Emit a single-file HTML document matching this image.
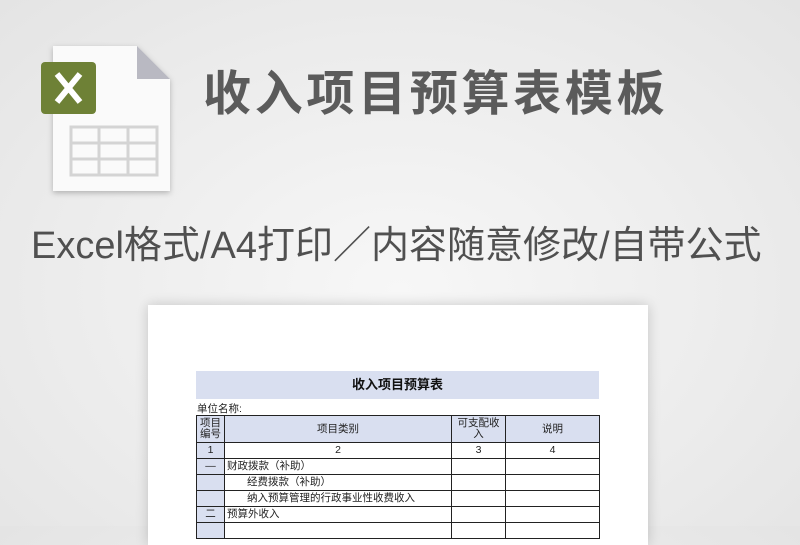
<!DOCTYPE html>
<html><head><meta charset="utf-8"><style>
html,body{margin:0;padding:0}
body{width:800px;height:526px;overflow:hidden;position:relative;background:radial-gradient(ellipse at 50% 55%,#f7f7f7 0%,#ececec 60%,#e4e4e4 100%);font-family:"Liberation Sans","Noto Sans CJK SC",sans-serif}
.t{position:absolute;left:203px;top:54px;font-size:48px;font-weight:bold;color:#5b5b5b;letter-spacing:3.7px;white-space:nowrap}
.s{position:absolute;left:31px;top:214px;font-size:38px;color:#505050;white-space:nowrap}
.paper{position:absolute;left:148px;top:305px;width:500px;height:240px;background:#fff;box-shadow:0 0 12px rgba(0,0,0,.18)}
.ban{position:absolute;left:196px;top:371px;width:403px;height:28px;background:#d9dff0;text-align:center;font-size:13px;font-weight:bold;line-height:28px;color:#111}
.u{position:absolute;left:197px;top:401px;font-size:10.5px;color:#222}
table{position:absolute;left:196px;top:415px;border-collapse:collapse;font-size:10.5px;color:#222}
td{border:1px solid #222;padding:0 2px;height:15px;line-height:11px}
.h td{background:#d9dff0;text-align:center;height:26px}
.g{background:#d9dff0;text-align:center}
</style></head><body>
<svg style="position:absolute;left:30px;top:35px" width="160" height="170" viewBox="0 0 160 170">
<defs><filter id="f" x="-20%" y="-20%" width="140%" height="140%"><feDropShadow dx="0" dy="2" stdDeviation="3" flood-opacity=".25"/></filter></defs>
<path d="M23 11 H107 L140 44 V156 H23 Z" fill="#fafafa" filter="url(#f)"/>
<path d="M107 11 L140 44 H107 Z" fill="#b9b9c2"/>
<rect x="11" y="27" width="55" height="52" rx="4" fill="#6e8136"/>
<path d="M27 39 L50 67 M50 39 L27 67" stroke="#fff" stroke-width="6"/>
<g fill="none" stroke="#d4d4d4" stroke-width="3"><rect x="41" y="92" width="86" height="48"/><path d="M41 108H127M41 124H127M69 92V140M98 92V140"/></g>
</svg>
<div class="t">收入项目预算表模板</div>
<div class="s">Excel格式/A4打印／内容随意修改/自带公式</div>
<div class="paper"></div>
<div class="ban">收入项目预算表</div>
<div class="u">单位名称:</div>
<table>
<tr class="h"><td style="width:23px">项目<br>编号</td><td style="width:222px">项目类别</td><td style="width:49px">可支配收<br>入</td><td style="width:89px">说明</td></tr>
<tr><td class="g">1</td><td style="text-align:center">2</td><td style="text-align:center">3</td><td style="text-align:center">4</td></tr>
<tr><td class="g">—</td><td>财政拨款（补助）</td><td></td><td></td></tr>
<tr><td class="g"></td><td style="padding-left:22px">经费拨款（补助）</td><td></td><td></td></tr>
<tr><td class="g"></td><td style="padding-left:22px">纳入预算管理的行政事业性收费收入</td><td></td><td></td></tr>
<tr><td class="g">二</td><td>预算外收入</td><td></td><td></td></tr>
<tr><td class="g"></td><td></td><td></td><td></td></tr>
</table>
</body></html>
